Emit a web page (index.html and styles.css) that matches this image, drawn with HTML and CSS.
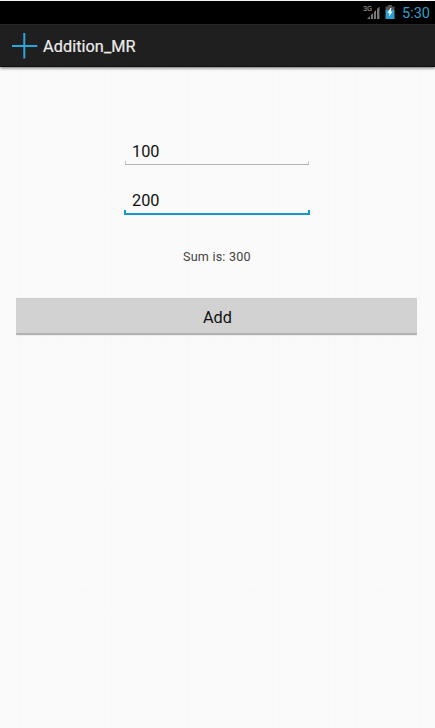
FILE: index.html
```html
<!DOCTYPE html>
<html lang="en">
<head>
<meta charset="utf-8">
<title>Addition_MR</title>
<link rel="stylesheet" href="styles.css">
</head>
<body>
<div class="status">
  <svg class="signal" width="18" height="16" viewBox="0 0 18 16">
    <text class="net" x="0" y="7" textLength="9">3G</text>
    <path fill="#777" d="M4 15 7 12V15ZM8 11 10 9V15H8ZM11 8 13 6V15H11ZM14 5 16.500 2.500V15H14Z"/>
  </svg>
  <svg class="battery" width="10" height="14" viewBox="0 0 10 14">
    <path fill="#555" d="M3 0H7V1.500H9.500V5H.5V1.500H3Z"/>
    <path fill="#2e9fca" d="M.5 5H9.500V14H.5Z"/>
    <path fill="#fff" d="M5.500 3 2.500 8H4.500L4 11.500 7.500 6.500H5.500L6.500 3Z"/>
  </svg>
  <span class="clock">5:30</span>
</div>
<header class="bar">
  <svg class="plus" width="26" height="26" viewBox="0 0 26 26">
    <path fill="#2ba6dc" d="M11.300 0H13.300V12H25.300V14H13.300V25.500H11.300V14H0V12H11.300Z"/>
  </svg>
  <h1 class="title">Addition_MR</h1>
</header>
<main class="content">
  <div class="field">100</div>
  <div class="field focused">200</div>
  <p class="sum">Sum is: 300</p>
  <button class="add" type="button">Add</button>
</main>
</body>
</html>
```
FILE: styles.css
```css
* { box-sizing: border-box; }
body {
  margin: 0;
  height: 728px;
  display: flex;
  flex-direction: column;
  overflow: hidden;
  background: #fafafa;
  border-top: 1px solid #f4f4f4;
  font-family: Roboto, "Liberation Sans", sans-serif;
}
.status {
  height: 23px;
  flex: none;
  display: flex;
  justify-content: flex-end;
  align-items: center;
  padding-right: 5px;
  background: #000;
}
.signal { margin: 0 4px 1px 0; }
.battery { margin: 0 7px 1px 0; }
.net { font-size: 7.5px; fill: #aaa; }
.clock { width: 28px; padding-top: 2px; font-size: 14.500px; line-height: 22px; color: #2e9fca; white-space: nowrap; }
.bar {
  height: 43px;
  flex: none;
  display: flex;
  align-items: center;
  padding-left: 12px;
  background: #1f1f1f;
  border-top: 1px solid #292929;
  border-bottom: 1px solid #111;
  box-shadow: 0 1px 3px rgba(0, 0, 0, .6);
}
.title {
  margin: 1px 0 0 5px;
  font-size: 16.300px;
  font-weight: 400;
  letter-spacing: .05px;
  color: #ececec;
  -webkit-text-stroke: .2px #ececec;
}
.content {
  flex: 1;
  display: flex;
  flex-direction: column;
  padding: 71px 18px 0 16px;
  background: repeating-linear-gradient(90deg, transparent 0 20px, rgba(0, 0, 0, .006) 20px 21px),
    repeating-linear-gradient(transparent 0 20px, rgba(0, 0, 0, .006) 20px 21px);
}
.field {
  width: 185px;
  height: 27px;
  margin-left: 108px;
  padding-left: 8px;
  font-size: 16.300px;
  line-height: 28px;
  color: #111;
  background: linear-gradient(#b3b3b3, #b3b3b3) 1px 100% / 184px 1px no-repeat,
    linear-gradient(#c4c4c4, #c4c4c4) 1px 100% / 1px 4px no-repeat,
    linear-gradient(#c4c4c4, #c4c4c4) 100% 100% / 1px 4px no-repeat;
}
.focused {
  width: 186px;
  height: 29px;
  margin-top: 21px;
  padding-top: 1px;
  background: linear-gradient(#1698c8, #1698c8) 0 100% / 100% 2px no-repeat,
    linear-gradient(#1698c8, #1698c8) 0 100% / 2px 5px no-repeat,
    linear-gradient(#1698c8, #1698c8) 100% 100% / 2px 5px no-repeat;
}
.sum {
  margin: 33px 0 0 167px;
  font-size: 12.600px;
  letter-spacing: .2px;
  line-height: 18px;
  color: #444;
}
.add {
  height: 37px;
  margin-top: 32px;
  padding: 2px 0 0 2px;
  border: 0;
  border-top: 1px solid #cecece;
  border-bottom: 2px solid #b2b2b2;
  border-radius: 1px;
  background: #d2d2d2;
  box-shadow: 0 1px 1px rgba(0, 0, 0, .06);
  font: 16.300px Roboto, "Liberation Sans", sans-serif;
  color: #111;
}
```
